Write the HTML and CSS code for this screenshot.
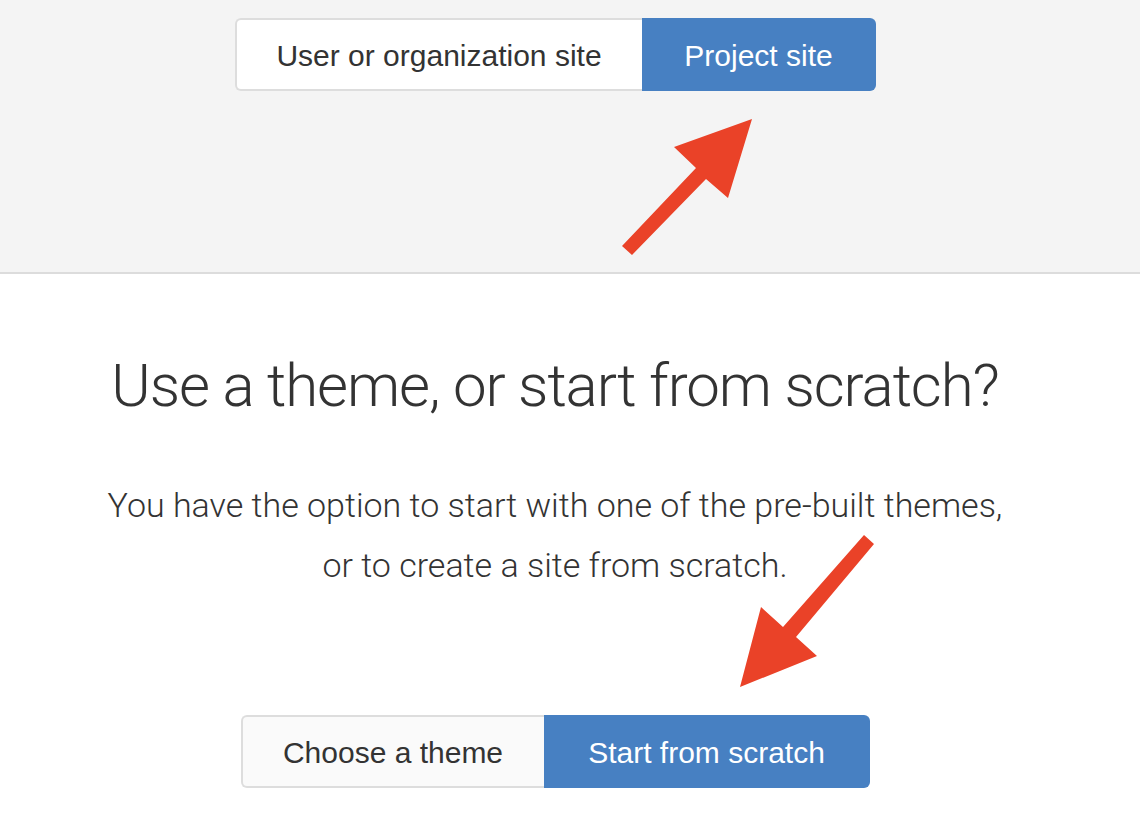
FILE: index.html
```html
<!DOCTYPE html>
<html>
<head>
<meta charset="utf-8">
<link rel="stylesheet" href="styles.css">
</head>
<body>
<div class="page">
  <header class="top">
    <div class="wrap">
      <div class="seg">
        <div class="seg-btn seg-left">User or organization site</div>
        <div class="seg-btn seg-right">Project site</div>
      </div>
    </div>
  </header>
  <main class="main">
    <div class="wrap col">
      <h1 class="title">Use a theme, or start from scratch?</h1>
      <p class="lead">You have the option to start with one of the pre-built themes,<br>or to create a site from scratch.</p>
      <div class="seg seg-bottom">
        <div class="seg-btn seg-left2">Choose a theme</div>
        <div class="seg-btn seg-right2">Start from scratch</div>
      </div>
    </div>
  </main>
  <svg class="arrows" width="1140" height="822" viewBox="0 0 1140 822">
    <polygon fill="#ea4228" points="752,119 728,198 706,179 632,255 622,246 696,168 674,147"/>
    <polygon fill="#ea4228" points="740,687 761,607 783,627 864,535 874,544 796,637 817,656"/>
  </svg>
</div>
</body>
</html>
```
FILE: styles.css
```css
html, body {
  margin: 0;
  padding: 0;
  background: #ffffff;
}
body {
  font-family: "Liberation Sans", Arial, sans-serif;
  color: #333333;
}
.page {
  position: relative;
  width: 1140px;
  height: 822px;
  overflow: hidden;
}
.wrap {
  width: 1110px;
  display: flex;
  justify-content: center;
}
.col {
  flex-direction: column;
  align-items: center;
}
.top {
  background: #f4f4f4;
  border-bottom: 2px solid #dcdcdc;
  padding-top: 18px;
  box-sizing: content-box;
  height: 254px;
}
.seg {
  display: flex;
  height: 73px;
}
.seg-btn {
  display: flex;
  align-items: center;
  justify-content: center;
  font-size: 30px;
  box-sizing: border-box;
  height: 73px;
  padding-top: 2px;
}
.seg-left {
  width: 407px;
  background: #ffffff;
  border: 2px solid #dddddd;
  border-right: none;
  border-radius: 6px 0 0 6px;
  color: #333333;
}
.seg-right {
  width: 234px;
  background: #4780c2;
  color: #ffffff;
  border-radius: 0 6px 6px 0;
}
.main {
  padding-top: 75px;
}
.title {
  margin: 0;
  font-family: Roboto, "Liberation Sans", sans-serif;
  font-weight: 300;
  font-size: 60px;
  letter-spacing: -1.1px;
  line-height: 74px;
  color: #333333;
}
.lead {
  margin: 52px 0 0;
  font-family: Roboto, "Liberation Sans", sans-serif;
  font-weight: 300;
  font-size: 34px;
  line-height: 60px;
  text-align: center;
  color: #333333;
}
.seg-bottom {
  margin-top: 120px;
}
.seg-left2 {
  width: 303px;
  background: #fafafa;
  border: 2px solid #dddddd;
  border-right: none;
  border-radius: 6px 0 0 6px;
}
.seg-right2 {
  width: 326px;
  background: #4780c2;
  color: #ffffff;
  border-radius: 0 6px 6px 0;
}
.arrows {
  position: absolute;
  left: 0;
  top: 0;
  pointer-events: none;
}
```
